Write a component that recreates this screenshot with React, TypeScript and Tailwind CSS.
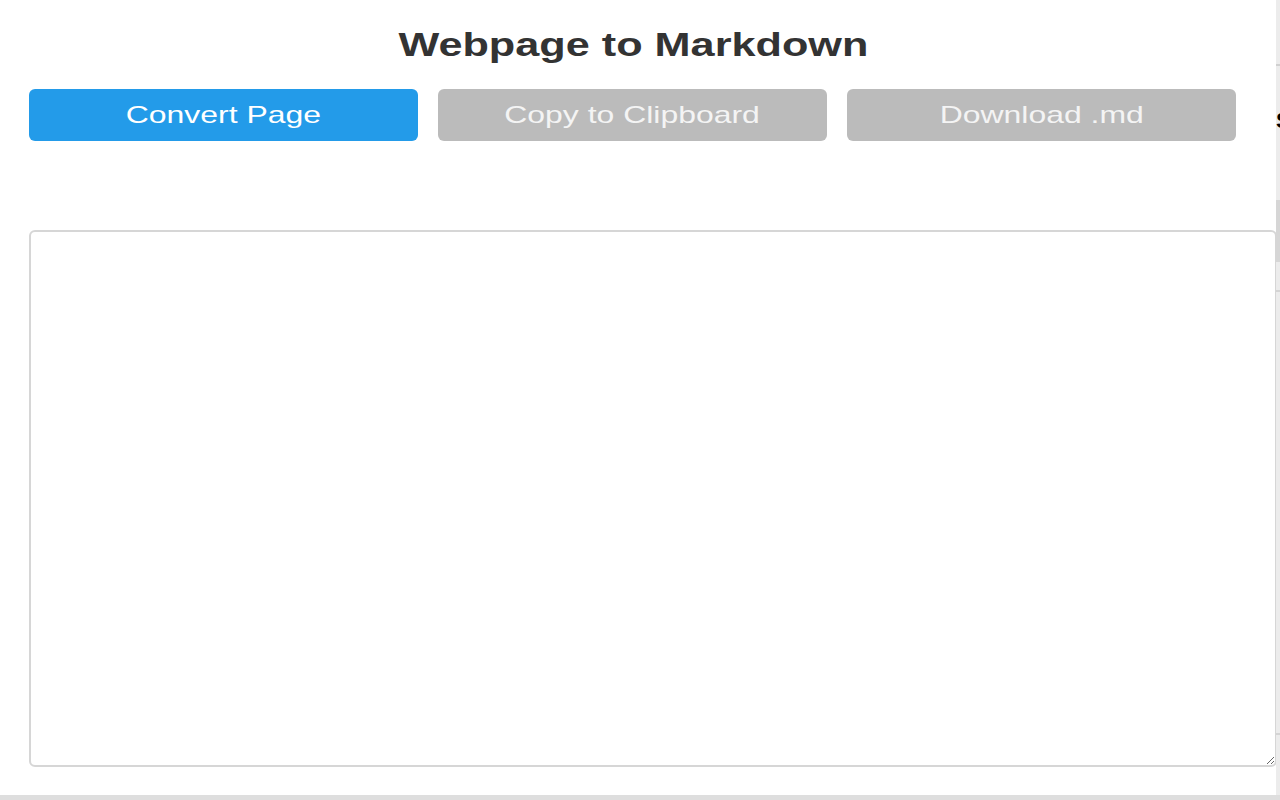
import type { ReactNode } from "react";

function ActionButton({ children, primary }: { children: ReactNode; primary?: boolean }) {
    return (
        <button
            className={
                primary
                    ? "flex-1 h-[52px] flex items-center justify-center rounded-md bg-[#239be9] text-white"
                    : "flex-1 h-[52px] flex items-center justify-center rounded-md bg-[#bbbbbb] text-[#f4f4f4]"
            }
        >
            <span className="inline-block scale-x-[1.33] text-[24px] leading-none">{children}</span>
        </button>
    );
}

export default function App() {
    return (
        <div className="w-[1280px] h-[800px] bg-[#dedede] overflow-hidden font-['Liberation_Sans',Arial,sans-serif]">
            <div className="flex h-[795px]">
                {/* Popup */}
                <div className="w-[1276px] shrink-0 h-full bg-white overflow-hidden flex flex-col">
                    <h1 className="pt-[28px] pr-[10px] text-center text-[33px] leading-none font-bold text-[#333333]">
                        <span className="inline-block scale-x-[1.31]">Webpage to Markdown</span>
                    </h1>

                    <div className="flex gap-[20px] mt-[28px] pl-[29px] pr-[40px]">
                        <ActionButton primary>Convert Page</ActionButton>
                        <ActionButton>Copy to Clipboard</ActionButton>
                        <ActionButton>Download .md</ActionButton>
                    </div>

                    <textarea
                        className="mt-[89px] ml-[29px] w-[1248px] h-[537px] shrink-0 border-2 border-[#d6d6d6] rounded-md bg-white outline-none"
                    />
                </div>

                {/* Page behind the popup */}
                <div className="flex-1 min-w-0 h-full bg-[#ececec] overflow-hidden flex flex-col">
                    <div className="h-[64px]" />
                    <div className="h-[2px] bg-[#d0d0d0]" />
                    <div className="h-[44px]" />
                    <div className="h-[22px] overflow-hidden">
                        <span className="block text-[22px] leading-none font-bold text-black">S</span>
                    </div>
                    <div className="h-[68px]" />
                    <div className="h-[62px] bg-[#d6d6d6]" />
                    <div className="h-[28px]" />
                    <div className="h-[2px] bg-[#d4d4d4]" />
                    <div className="h-[441px]" />
                    <div className="h-[2px] bg-[#d4d4d4]" />
                </div>
            </div>
        </div>
    );
}
